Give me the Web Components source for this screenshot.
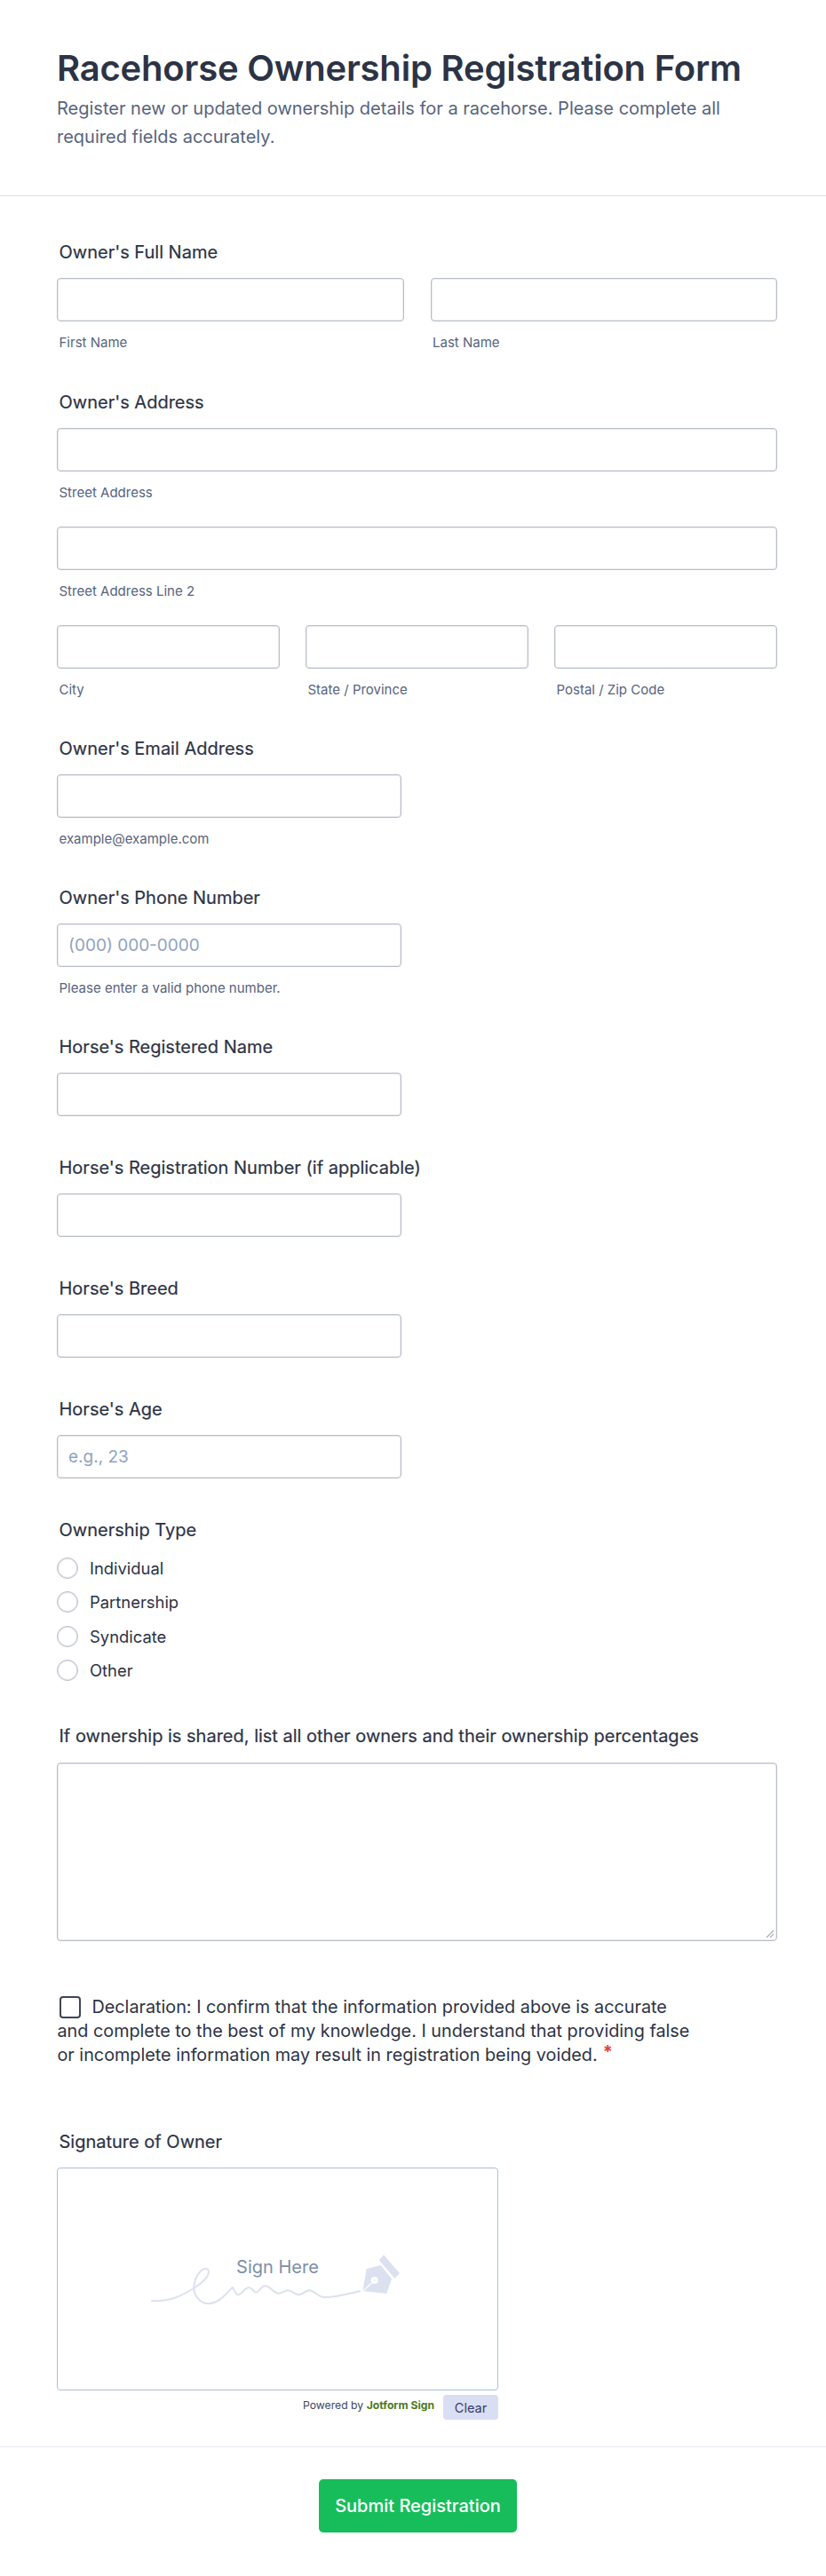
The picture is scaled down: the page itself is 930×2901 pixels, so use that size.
<!DOCTYPE html>
<html><head><meta charset="utf-8"><style>
html,body{margin:0;padding:0;background:#fff;font-family:Inter,"Liberation Sans",sans-serif;color:#2c3345}
</style></head><body>
<template id="t-header"><style>
:host{display:block;box-sizing:border-box;height:221px;padding:53px 64px 0;border-bottom:1px solid #dadee8}
h1{margin:0;font:600 40px/48px Inter,sans-serif;color:#2c3345;letter-spacing:-.2px}
p{margin:5px 0 0;font:400 20px/32px Inter,sans-serif;color:#57647e;width:790px}
</style><h1><slot name="title"></slot></h1><p><slot name="sub"></slot></p></template>
<template id="t-field"><style>
:host{display:block;padding:0 0 0 64px;width:811px}
.l{font:400 20px/28px Inter,sans-serif;color:#2c3345;padding-left:2.5px;height:28px;-webkit-text-stroke:.2px #2c3345}
.b{margin-top:var(--gap,15px)}
</style><div class="l"><slot name="label"></slot></div><div class="b"><slot></slot></div></template>
<template id="t-input"><style>
:host{display:block;width:var(--w,100%)}
.i{box-sizing:border-box;height:49px;border:1px solid #b8bdc9;box-shadow:inset 0 0 0 1px rgba(184,189,201,.3);border-radius:4px;background:#fff;padding:0 12px;font:400 19px/47px Inter,sans-serif;color:#8fa3bf;white-space:nowrap}
.s{font:400 15px/18px Inter,sans-serif;color:#57647e;padding:15px 0 0 2.5px;height:18px}
:host(:not([sub])) .s{display:none}
</style><div class="i"><slot name="ph"></slot></div><div class="s"><slot></slot></div></template>
<template id="t-radio"><style>
:host{display:flex;align-items:center;gap:13px;height:24px;font:400 18.4px/24px Inter,sans-serif;color:#2c3345;margin-bottom:14.3px}
:host(:last-child){margin-bottom:0}
i{box-sizing:border-box;width:24px;height:24px;border:1px solid #b8bdc9;box-shadow:inset 0 0 0 1px rgba(184,189,201,.4);border-radius:50%;background:#fff;flex:none}
</style><i></i><span><slot></slot></span></template>
<template id="t-sign"><style>
:host{display:block;position:relative;width:497px}
.box{box-sizing:border-box;height:251px;border:1px solid #a9c0de;border-radius:4px;background:#fff;position:relative}
svg{position:absolute;left:75px;top:49px}
.h{position:absolute;left:0;right:0;top:98px;text-align:center;font:400 20px/26px Inter,sans-serif;color:#7d8eab}
.f{display:flex;justify-content:flex-end;align-items:center;gap:10px;margin-top:5px}
.p{font:400 12.2px/16px Inter,sans-serif;color:#3c4760;margin-top:-4px}
.c{box-sizing:border-box;width:62px;height:28px;background:#dadef3;border-radius:4px;text-align:center;font:400 14.5px/30px Inter,sans-serif;color:#343c6a}
</style><div class="box"><svg width="340" height="150" viewBox="0 0 1020 450" aria-hidden="true"><path d="M93 300C120 303 135 300 155 295C185 288 210 273 235 258C262 240 295 215 282 194C262 185 240 215 235 250C232 280 255 310 285 310C320 308 345 275 365 255C372 262 375 280 385 280C398 278 405 258 420 255C432 256 438 272 445 272C458 268 462 250 475 250C495 252 502 272 520 275C535 275 542 265 555 265C570 268 575 280 590 280C605 278 612 265 625 265C645 268 655 288 675 288C710 290 755 277 795 268" fill="none" stroke="#dce1ef" stroke-width="6" stroke-linecap="round"/><path d="M805 267L818 192L866 180L903 226L886 276Z" fill="#dce1ef"/><path d="M806 267L836 240" stroke="#fff" stroke-width="3.5"/><circle cx="845" cy="231" r="12" fill="#fff"/><circle cx="845" cy="231" r="4" fill="#eef0f7"/><path d="M860 163L876 145L930 207L913 224Z" fill="#dce1ef"/></svg><div class="h"><slot name="hint"></slot></div></div><div class="f"><span class="p"><slot name="pw"></slot></span><span class="c"><slot name="clear"></slot></span></div></template>
<script>
for (const [n,id] of [['form-header','t-header'],['form-field','t-field'],['text-box','t-input'],['radio-opt','t-radio'],['sign-pad','t-sign']]){
  customElements.define(n,class extends HTMLElement{constructor(){super();this.attachShadow({mode:'open'}).appendChild(document.getElementById(id).content.cloneNode(true));}});
}
customElements.define('text-area',class extends HTMLElement{constructor(){super();this.attachShadow({mode:'open'}).innerHTML=`<style>:host{display:block;position:relative;box-sizing:border-box;height:201px;border:1px solid #b8bdc9;box-shadow:inset 0 0 0 1px rgba(184,189,201,.3);border-radius:4px;background:#fff}svg{position:absolute;right:2px;bottom:2px}</style><svg width="12" height="12" viewBox="0 0 12 12"><path d="M11 3L3 11M11 7L7 11" stroke="#a9aeb8" stroke-width="1.2"/></svg>`;}});
customElements.define('check-line',class extends HTMLElement{constructor(){super();this.attachShadow({mode:'open'}).innerHTML=`<style>:host{display:block;margin-left:64.5px;width:716px;font:400 19.8px/27px Inter,sans-serif;color:#2c3345}i{display:inline-block;box-sizing:border-box;width:24px;height:25px;border:2px solid #3e4558;border-radius:4px;margin:0 13px 0 2px;vertical-align:-6px}b{color:#f23a3c;font-weight:700;margin-left:6px;position:relative;top:-3px}</style><i></i><slot></slot><b>*</b>`;}});
customElements.define('form-footer',class extends HTMLElement{constructor(){super();this.attachShadow({mode:'open'}).innerHTML=`<style>:host{display:flex;justify-content:center;box-sizing:border-box;height:146px;padding-top:36px;border-top:1px solid #e8ebf4}div{box-sizing:border-box;width:223px;height:60px;margin-left:11px;background:#18bd5b;border-radius:5px;color:#fff;font:500 20px/60px Inter,sans-serif;text-align:center}</style><div><slot></slot></div>`;}});
customElements.define('form-row',class extends HTMLElement{constructor(){super();this.attachShadow({mode:'open'}).innerHTML=`<style>:host{display:grid;grid-template-columns:repeat(var(--n,2),1fr);column-gap:var(--g,30px)}</style><slot></slot>`;}});
</script>
<form-header><span slot="title">Racehorse Ownership Registration Form</span><span slot="sub">Register new or updated ownership details for a racehorse. Please complete all required fields accurately.</span></form-header>
<form-field style="margin-top:49px"><span slot="label">Owner's Full Name</span><form-row><text-box sub>First Name</text-box><text-box sub>Last Name</text-box></form-row></form-field>
<form-field style="margin-top:44px"><span slot="label">Owner's Address</span><text-box sub>Street Address</text-box><text-box sub style="margin-top:29px">Street Address Line 2</text-box><form-row style="--n:3;--g:29px;margin-top:29px"><text-box sub>City</text-box><text-box sub>State / Province</text-box><text-box sub>Postal / Zip Code</text-box></form-row></form-field>
<form-field style="margin-top:43px"><span slot="label">Owner's Email Address</span><text-box sub style="--w:388px">example@example.com</text-box></form-field>
<form-field style="margin-top:43px"><span slot="label">Owner's Phone Number</span><text-box sub style="--w:388px"><span slot="ph">(000) 000-0000</span>Please enter a valid phone number.</text-box></form-field>
<form-field style="margin-top:43px"><span slot="label">Horse's Registered Name</span><text-box style="--w:388px"></text-box></form-field>
<form-field style="margin-top:44px"><span slot="label">Horse's Registration Number (if applicable)</span><text-box style="--w:388px"></text-box></form-field>
<form-field style="margin-top:44px"><span slot="label">Horse's Breed</span><text-box style="--w:388px"></text-box></form-field>
<form-field style="margin-top:44px"><span slot="label">Horse's Age</span><text-box style="--w:388px"><span slot="ph">e.g., 23</span></text-box></form-field>
<form-field style="margin-top:44px;--gap:17px"><span slot="label">Ownership Type</span><radio-opt>Individual</radio-opt><radio-opt>Partnership</radio-opt><radio-opt>Syndicate</radio-opt><radio-opt>Other</radio-opt></form-field>
<form-field style="margin-top:48px;--gap:16px"><span slot="label">If ownership is shared, list all other owners and their ownership percentages</span><text-area></text-area></form-field>
<check-line style="margin-top:61px">Declaration: I confirm that the information provided above is accurate and complete to the best of my knowledge. I understand that providing false or incomplete information may result in registration being voided.</check-line>
<form-field style="margin-top:70px;--gap:15px"><span slot="label">Signature of Owner</span><sign-pad><span slot="hint">Sign Here</span><span slot="pw">Powered by <b style="font-weight:700;color:#4e7a22">Jotform Sign</b></span><span slot="clear">Clear</span></sign-pad></form-field>
<form-footer style="margin-top:30px">Submit Registration</form-footer>
</body></html>
